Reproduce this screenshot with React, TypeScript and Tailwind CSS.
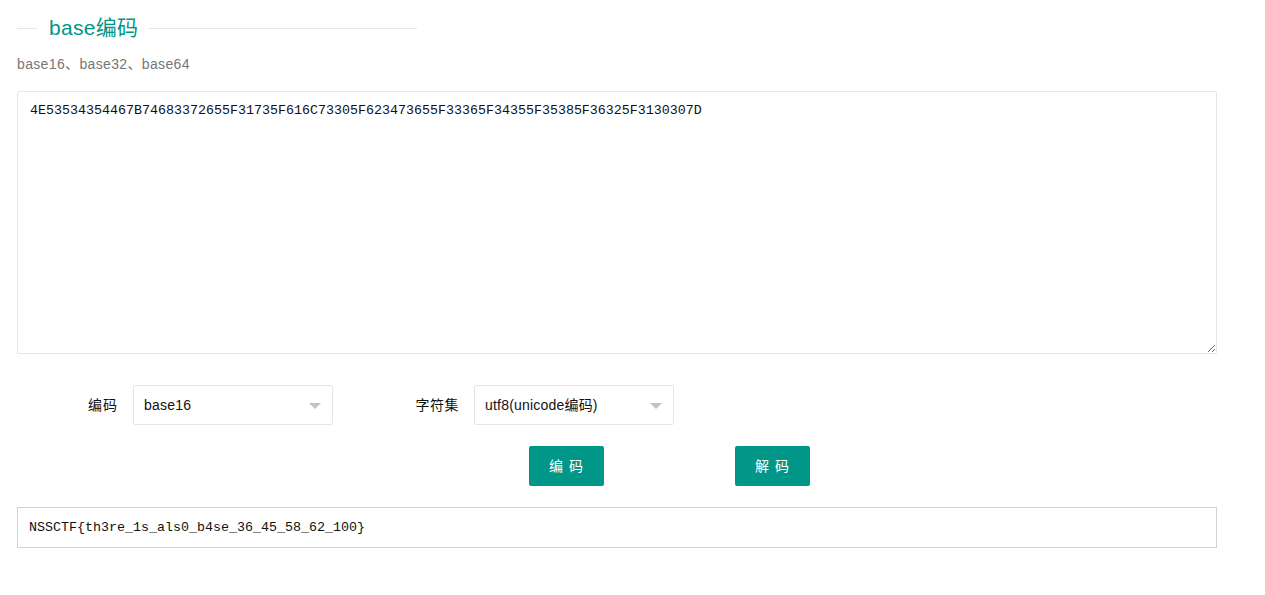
import React from "react";

const sans = { fontFamily: '"Liberation Sans", "Noto Sans CJK SC", sans-serif' };
const mono = { fontFamily: '"Liberation Mono", "Noto Sans CJK SC", monospace' };

function Select({ value }: { value: string }) {
  return (
    <div className="relative flex h-[40px] w-[200px] items-center rounded-[2px] border border-[#e6e6e6] bg-white pl-[10px] text-[14px] tracking-[0.2px] text-[#111]">
      {value}
      <span className="absolute right-[11px] top-[17px] h-0 w-0 border-x-[6px] border-t-[6px] border-x-transparent border-t-[#c2c2c2]" />
    </div>
  );
}

export default function App() {
  return (
    <div className="min-h-screen w-full bg-white pl-[17px]" style={sans}>
      <div className="w-[1200px]">
        {/* legend */}
        <div className="mt-[15px] flex h-[26px] w-[400px] items-center">
          <div className="h-px w-[20px] bg-[#e6e6e6]" />
          <span className="pl-[12px] pr-[11px] text-[21px] leading-[26px] tracking-[0.3px] text-[#009688]">base编码</span>
          <div className="h-px flex-1 bg-[#e6e6e6]" />
        </div>

        <p className="mt-[13px] text-[14px] leading-[20px] tracking-[0.35px] text-[#777]">base16、base32、base64</p>

        <textarea
          className="mt-[17px] block h-[263px] w-full rounded-[2px] border border-[#e6e6e6] px-[12px] py-[9px] text-[13.33px] leading-[20px] text-[#111] outline-none"
          style={mono}
          defaultValue="4E53534354467B74683372655F31735F616C73305F623473655F33365F34355F35385F36325F3130307D"
        />

        <div className="mt-[31px] flex items-center">
          <label className="w-[116px] pr-[15px] text-right text-[14px] tracking-[1px] text-[#111]">编码</label>
          <Select value="base16" />
          <label className="ml-[10px] w-[131px] pr-[15px] text-right text-[14px] tracking-[0.5px] text-[#111]">字符集</label>
          <Select value="utf8(unicode编码)" />
        </div>

        <div className="mt-[21px] flex">
          <button className="ml-[512px] h-[40px] w-[75px] rounded-[2px] bg-[#009688] text-[14px] tracking-[1px] text-white">编 码</button>
          <button className="ml-[131px] h-[40px] w-[75px] rounded-[2px] bg-[#009688] text-[14px] tracking-[1px] text-white">解 码</button>
        </div>

        <div
          className="mt-[21px] flex h-[41px] w-full items-center border border-[#d2d2d2] px-[11px] text-[13.33px] text-[#111]"
          style={mono}
        >
          NSSCTF{"{"}th3re_1s_als0_b4se_36_45_58_62_100{"}"}
        </div>
      </div>
    </div>
  );
}
